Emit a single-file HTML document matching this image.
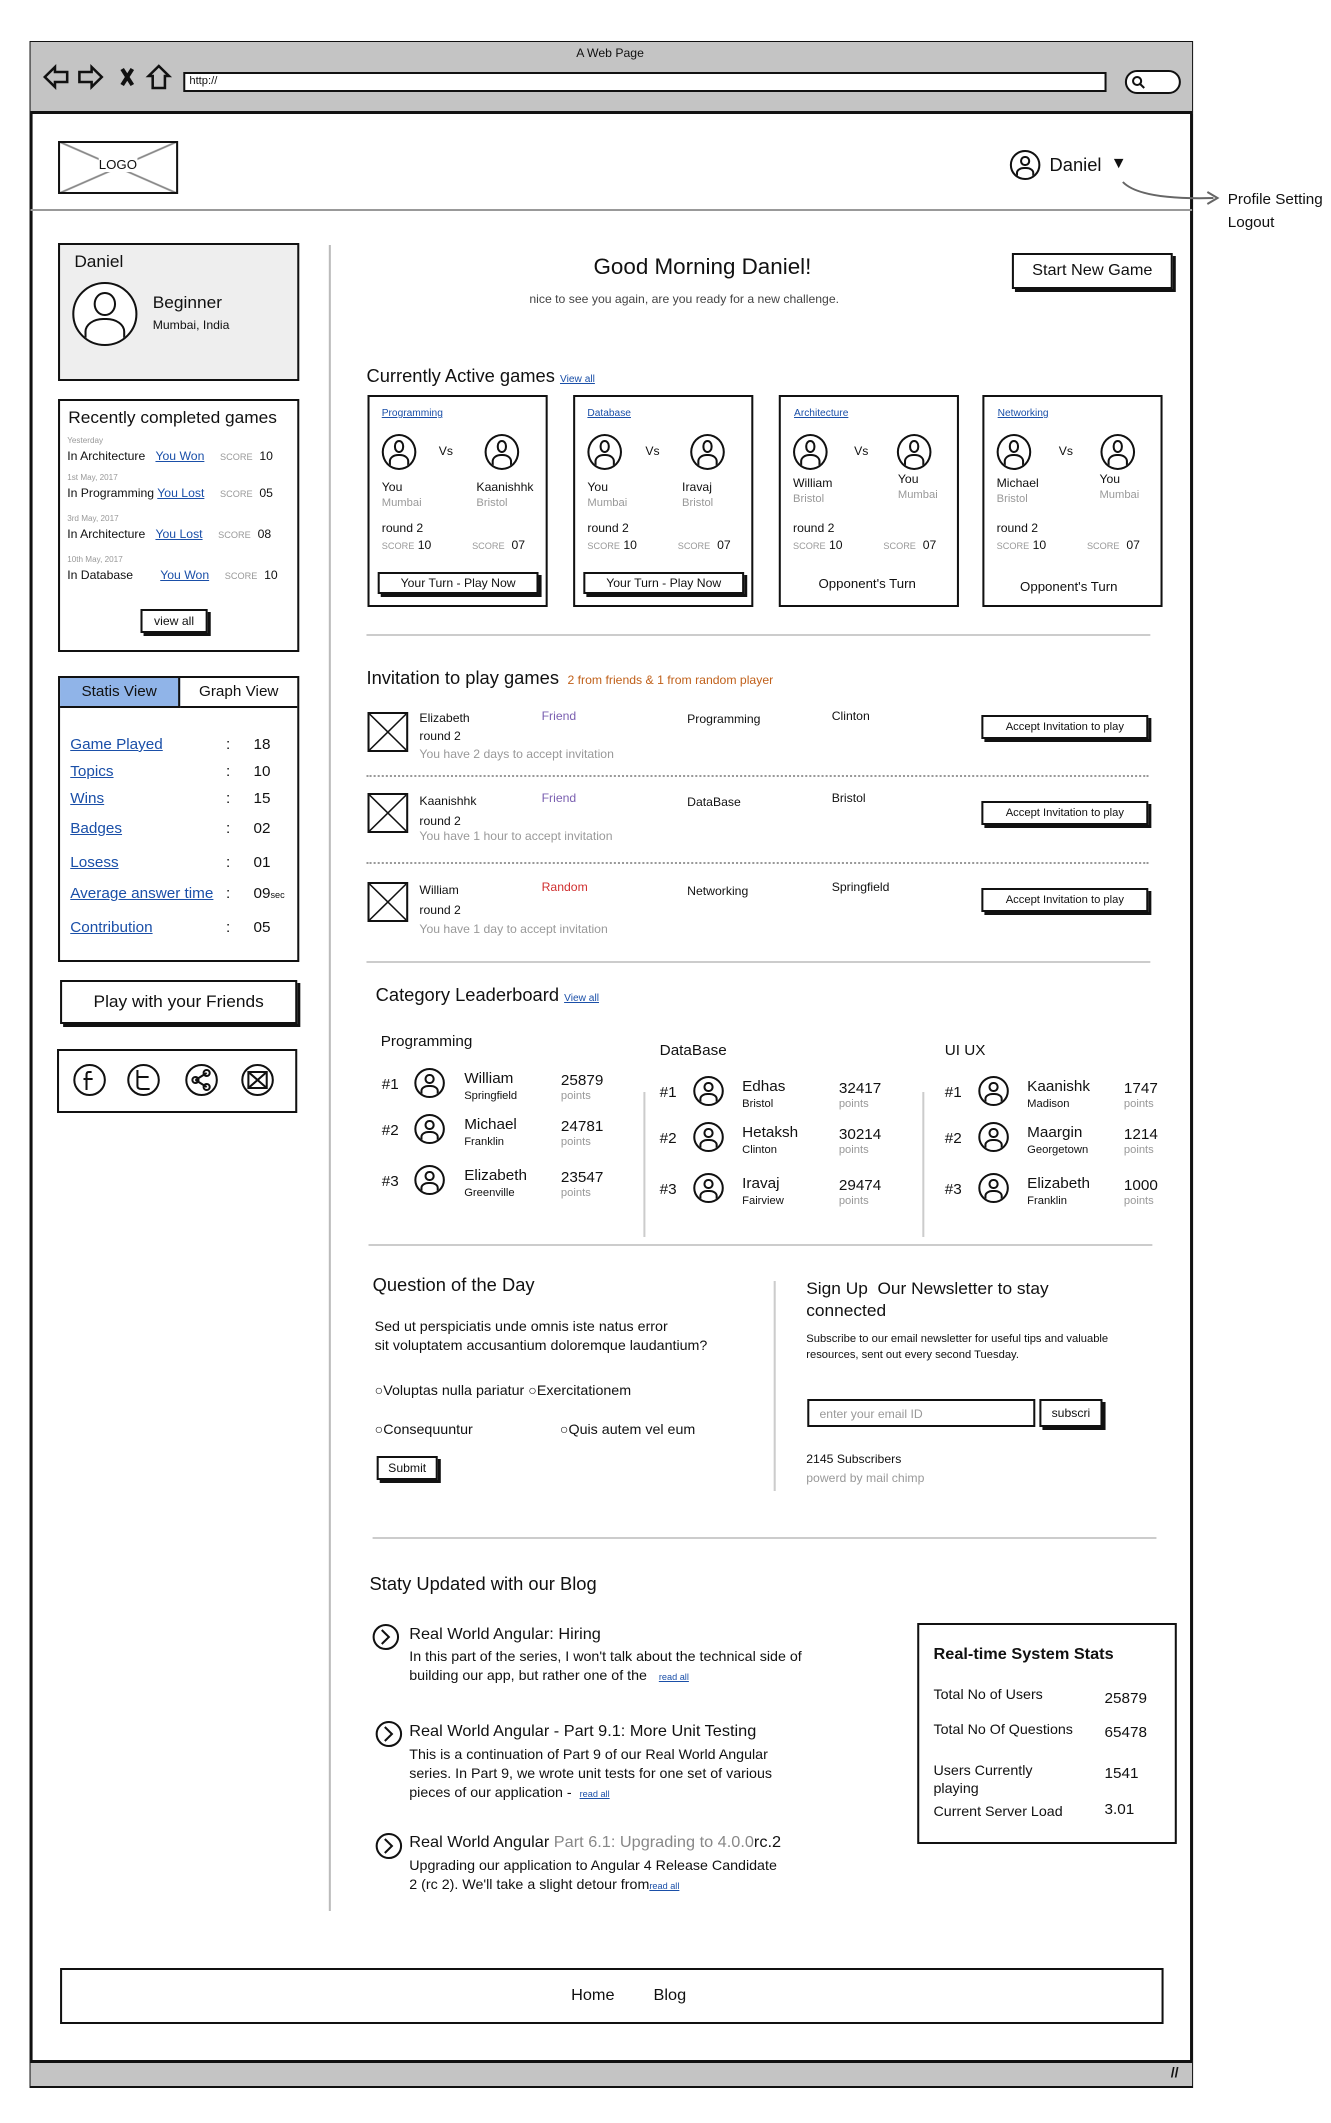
<!DOCTYPE html>
<html><head><meta charset="utf-8"><style>
*{margin:0;padding:0;box-sizing:border-box}
body{width:1331px;height:2123px;background:#fff;position:relative;font-family:"Liberation Sans",sans-serif;color:#111;overflow:hidden}
#w{position:absolute;left:0;top:0;width:1331px;height:2123px;transform:scaleX(1.018);transform-origin:0 0}
.a{position:absolute;white-space:nowrap}
.box{position:absolute;border:2.5px solid #111}
.btn{position:absolute;border:2px solid #111;box-shadow:3px 3px 0 #111;background:#fff;text-align:center}
.hl{position:absolute;height:2px;background:#ccc}
.lnk{color:#1a4fa8;text-decoration:underline}
.g{color:#999}
.s{font-size:11px}
.av{position:absolute;width:30px;height:30px;border:2px solid #111;border-radius:50%;overflow:hidden}
.av:before{content:"";position:absolute;left:32%;top:14%;width:36%;height:40%;border:2px solid #111;border-radius:50%;box-sizing:border-box}
.av:after{content:"";position:absolute;left:16%;top:56%;width:68%;height:50%;border:2px solid #111;border-radius:45% 45% 0 0;box-sizing:border-box}
.xb{position:absolute;width:40px;height:40px;border:2px solid #111;background:linear-gradient(45deg,transparent 48%,#111 49%,#111 51%,transparent 52%),linear-gradient(-45deg,transparent 48%,#111 49%,#111 51%,transparent 52%)}
.dot{position:absolute;height:0;border-top:2px dotted #999}
</style></head><body><div id="w">
<div class="box" style="left:29px;top:41px;width:1143px;height:2047px;border-width:3px"></div>
<div class="a" style="left:30px;top:42px;width:1141px;height:72px;background:#c4c4c4;border-bottom:3px solid #111"></div>
<div class="a" style="left:566px;top:46px;font-size:12px">A Web Page</div>
<svg class="a" style="left:42px;top:62px" width="140" height="30" viewBox="0 0 140 30" fill="none" stroke="#111" stroke-width="2.5">
<path d="M2 15 L12 5 V10 H24 V20 H12 V25 Z"/><path d="M58 15 L48 5 V10 H36 V20 H48 V25 Z"/>
<path d="M78 7 L88 23 M88 7 L78 23" stroke-width="4"/><path d="M104 14 L114 4 L124 14 H120 V26 H108 V14 Z"/></svg>
<div class="a" style="left:180px;top:72px;width:907px;height:20px;background:#fff;border:2.5px solid #111;font-size:11px;padding-left:4px;line-height:15px">http://</div>
<div class="a" style="left:1105px;top:70px;width:55px;height:24px;background:#fff;border:2.5px solid #111;border-radius:12px"></div>
<svg class="a" style="left:1110px;top:74px" width="16" height="16" fill="none" stroke="#111" stroke-width="2"><circle cx="7" cy="7" r="4"/><path d="M10 10 L14 14"/></svg>
<div class="a" style="left:30px;top:2060px;width:1141px;height:26px;background:#c4c4c4;border-top:3px solid #111"></div>
<div class="a" style="left:1150px;top:2064px;font-size:14px;font-weight:bold">//</div>
<div class="xb" style="left:57px;top:141px;width:118px;height:53px;border-width:2.5px;background:linear-gradient(24deg,transparent 48.5%,#888 49.5%,#888 50.5%,transparent 51.5%),linear-gradient(-24deg,transparent 48.5%,#888 49.5%,#888 50.5%,transparent 51.5%)"></div>
<div class="a" style="left:97px;top:157px;font-size:13px;background:#fff">LOGO</div>
<div class="av" style="left:992px;top:150px"></div>
<div class="a" style="left:1031px;top:155px;font-size:18px">Daniel</div>
<div class="a" style="left:1091px;top:155px;font-size:16px">▼</div>
<svg class="a" style="left:1100px;top:180px" width="100" height="30"><path d="M3 2 Q20 20 92 18" stroke="#666" stroke-width="2" fill="none"/><path d="M86 12 L96 18 L86 24" stroke="#666" stroke-width="2" fill="none"/></svg>
<div class="a" style="left:1206px;top:191px;font-size:15px">Profile Setting</div>
<div class="a" style="left:1206px;top:214px;font-size:15px">Logout</div>
<div class="hl" style="left:30px;top:209px;width:1141px;background:#999"></div>
<div class="box" style="left:57px;top:243px;width:237px;height:138px;background:#eee"></div>
<div class="a" style="left:73px;top:252px;font-size:17px">Daniel</div>
<div class="av" style="left:71px;top:282px;width:64px;height:64px;background:#fff"></div>
<div class="a" style="left:150px;top:293px;font-size:17px">Beginner</div>
<div class="a" style="left:150px;top:318px;font-size:12px">Mumbai, India</div>
<div class="box" style="left:57px;top:399px;width:237px;height:253px"></div>
<div class="a" style="left:67px;top:408px;font-size:17px">Recently completed games</div>
<div style="position:absolute;left:66px;top:437px;font-size:12px;line-height:1;white-space:nowrap">
<div class="g" style="font-size:8px">Yesterday</div><div style="margin-top:5px">In Architecture &nbsp;&nbsp;<span class="lnk">You Won</span> <span class="g" style="font-size:9px;margin-left:12px">SCORE</span> &nbsp;10</div>
<div class="g" style="font-size:8px;margin-top:12px">1st May, 2017</div><div style="margin-top:5px">In Programming <span class="lnk">You Lost</span> <span class="g" style="font-size:9px;margin-left:12px">SCORE</span> &nbsp;05</div>
<div class="g" style="font-size:8px;margin-top:16px">3rd May, 2017</div><div style="margin-top:5px">In Architecture &nbsp;&nbsp;<span class="lnk">You Lost</span> <span class="g" style="font-size:9px;margin-left:12px">SCORE</span> &nbsp;08</div>
<div class="g" style="font-size:8px;margin-top:16px">10th May, 2017</div><div style="margin-top:5px">In Database &nbsp;&nbsp;&nbsp;&nbsp;&nbsp;&nbsp;&nbsp;<span class="lnk">You Won</span> <span class="g" style="font-size:9px;margin-left:12px">SCORE</span> &nbsp;10</div></div>
<div class="btn" style="left:138px;top:609px;width:66px;height:24px;font-size:12px;line-height:20px">view all</div>
<div class="box" style="left:57px;top:676px;width:237px;height:286px"></div>
<div class="a" style="left:59px;top:678px;width:118px;height:30px;background:#90b4e8;border-right:2px solid #111;border-bottom:2px solid #111;font-size:15px;text-align:center;line-height:28px">Statis View</div>
<div class="a" style="left:177px;top:678px;width:115px;height:30px;border-bottom:2px solid #111;font-size:15px;text-align:center;line-height:28px">Graph View</div>
<div style="position:absolute;left:69px;top:737px;font-size:15px;line-height:1">
<div style="height:27px"><span class="lnk">Game Played</span></div><div style="height:27px"><span class="lnk">Topics</span></div><div style="height:30px"><span class="lnk">Wins</span></div><div style="height:34px"><span class="lnk">Badges</span></div><div style="height:31px"><span class="lnk">Losess</span></div><div style="height:34px"><span class="lnk">Average answer time</span></div><div><span class="lnk">Contribution</span></div></div>
<div style="position:absolute;left:222px;top:737px;font-size:15px;line-height:1">
<div style="height:27px">:</div><div style="height:27px">:</div><div style="height:30px">:</div><div style="height:34px">:</div><div style="height:31px">:</div><div style="height:34px">:</div><div>:</div></div>
<div style="position:absolute;left:249px;top:737px;font-size:15px;line-height:1">
<div style="height:27px">18</div><div style="height:27px">10</div><div style="height:30px">15</div><div style="height:34px">02</div><div style="height:31px">01</div><div style="height:34px">09<span style="font-size:9px">sec</span></div><div>05</div></div>
<div class="btn" style="left:59px;top:980px;width:233px;height:44px;font-size:17px;line-height:40px">Play with your Friends</div>
<div class="box" style="left:56px;top:1049px;width:236px;height:64px"></div>
<svg class="a" style="left:70px;top:1062px" width="210" height="36" fill="none" stroke="#111" stroke-width="2">
<circle cx="18" cy="18" r="15"/><path d="M20 10 H17 Q15 10 15 13 V28 M12 17 H21"/>
<circle cx="71" cy="18" r="15"/><path d="M65 8 V24 Q65 27 69 27 H77 M65 15 H76"/>
<circle cx="128" cy="18" r="15"/><circle cx="122" cy="18" r="3"/><circle cx="133" cy="11" r="3"/><circle cx="133" cy="25" r="3"/><path d="M122 18 L133 11 M122 18 L133 25"/>
<circle cx="183" cy="18" r="15"/><rect x="174" y="10" width="18" height="16"/><path d="M174 10 L192 26 M192 10 L174 26"/></svg>
<div class="a" style="left:323px;top:245px;width:2px;height:1666px;background:#bbb"></div>
<div class="a" style="left:583px;top:254px;font-size:22px">Good Morning Daniel!</div>
<div class="a" style="left:520px;top:292px;font-size:12px;color:#444">nice to see you again, are you ready for a new challenge.</div>
<div class="btn" style="left:994px;top:253px;width:158px;height:36px;font-size:16px;line-height:32px">Start New Game</div>
<div class="a" style="left:360px;top:366px;font-size:18px">Currently Active games <span class="lnk" style="font-size:10px">View all</span></div>
<div class="box" style="left:361px;top:395px;width:177px;height:212px"></div>
<div class="box" style="left:563px;top:395px;width:177px;height:212px"></div>
<div class="box" style="left:765px;top:395px;width:177px;height:212px"></div>
<div class="box" style="left:965px;top:395px;width:177px;height:212px"></div>
<div class="a lnk" style="left:375px;top:408px;font-size:10px">Programming</div>
<div class="a lnk" style="left:577px;top:408px;font-size:10px">Database</div>
<div class="a lnk" style="left:780px;top:408px;font-size:10px">Architecture</div>
<div class="a lnk" style="left:980px;top:408px;font-size:10px">Networking</div>
<div class="av" style="left:375px;top:434px;width:34px;height:36px"></div><div class="a" style="left:431px;top:444px;font-size:12px">Vs</div><div class="av" style="left:476px;top:434px;width:34px;height:36px"></div>
<div class="av" style="left:577px;top:434px;width:34px;height:36px"></div><div class="a" style="left:634px;top:444px;font-size:12px">Vs</div><div class="av" style="left:678px;top:434px;width:34px;height:36px"></div>
<div class="av" style="left:779px;top:434px;width:34px;height:36px"></div><div class="a" style="left:839px;top:444px;font-size:12px">Vs</div><div class="av" style="left:881px;top:434px;width:34px;height:36px"></div>
<div class="av" style="left:979px;top:434px;width:34px;height:36px"></div><div class="a" style="left:1040px;top:444px;font-size:12px">Vs</div><div class="av" style="left:1081px;top:434px;width:34px;height:36px"></div>
<div class="a" style="left:375px;top:480px;font-size:12px;line-height:15px">You<br><span class="g s">Mumbai</span></div>
<div class="a" style="left:468px;top:480px;font-size:12px;line-height:15px">Kaanishhk<br><span class="g s">Bristol</span></div>
<div class="a" style="left:577px;top:480px;font-size:12px;line-height:15px">You<br><span class="g s">Mumbai</span></div>
<div class="a" style="left:670px;top:480px;font-size:12px;line-height:15px">Iravaj<br><span class="g s">Bristol</span></div>
<div class="a" style="left:779px;top:476px;font-size:12px;line-height:15px">William<br><span class="g s">Bristol</span></div>
<div class="a" style="left:882px;top:472px;font-size:12px;line-height:15px">You<br><span class="g s">Mumbai</span></div>
<div class="a" style="left:979px;top:476px;font-size:12px;line-height:15px">Michael<br><span class="g s">Bristol</span></div>
<div class="a" style="left:1080px;top:472px;font-size:12px;line-height:15px">You<br><span class="g s">Mumbai</span></div>
<div class="a" style="left:375px;top:520px;font-size:12px;line-height:17px">round 2<br><span class="g" style="font-size:9px">SCORE</span> 10 &nbsp;&nbsp;&nbsp;&nbsp;&nbsp;&nbsp;&nbsp;&nbsp;&nbsp;&nbsp;&nbsp;<span class="g" style="font-size:9px">SCORE</span> &nbsp;07</div>
<div class="a" style="left:577px;top:520px;font-size:12px;line-height:17px">round 2<br><span class="g" style="font-size:9px">SCORE</span> 10 &nbsp;&nbsp;&nbsp;&nbsp;&nbsp;&nbsp;&nbsp;&nbsp;&nbsp;&nbsp;&nbsp;<span class="g" style="font-size:9px">SCORE</span> &nbsp;07</div>
<div class="a" style="left:779px;top:520px;font-size:12px;line-height:17px">round 2<br><span class="g" style="font-size:9px">SCORE</span> 10 &nbsp;&nbsp;&nbsp;&nbsp;&nbsp;&nbsp;&nbsp;&nbsp;&nbsp;&nbsp;&nbsp;<span class="g" style="font-size:9px">SCORE</span> &nbsp;07</div>
<div class="a" style="left:979px;top:520px;font-size:12px;line-height:17px">round 2<br><span class="g" style="font-size:9px">SCORE</span> 10 &nbsp;&nbsp;&nbsp;&nbsp;&nbsp;&nbsp;&nbsp;&nbsp;&nbsp;&nbsp;&nbsp;<span class="g" style="font-size:9px">SCORE</span> &nbsp;07</div>
<div class="btn" style="left:371px;top:572px;width:158px;height:22px;font-size:12px;line-height:18px">Your Turn - Play Now</div>
<div class="btn" style="left:573px;top:572px;width:158px;height:22px;font-size:12px;line-height:18px">Your Turn - Play Now</div>
<div class="a" style="left:804px;top:576px;font-size:13px">Opponent's Turn</div>
<div class="a" style="left:1002px;top:579px;font-size:13px">Opponent's Turn</div>
<div class="hl" style="left:360px;top:634px;width:770px"></div>
<div class="a" style="left:360px;top:668px;font-size:18px">Invitation to play games <span style="font-size:12px;color:#c0601a">&nbsp;2 from friends &amp; 1 from random player</span></div>
<div class="xb" style="left:361px;top:712px"></div>
<div class="a" style="left:412px;top:709px;font-size:12px;line-height:18px">Elizabeth<br>round 2<br><span class="g">You have 2 days to accept invitation</span></div>
<div class="a" style="left:532px;top:709px;font-size:12px;color:#7a5fb0">Friend</div>
<div class="a" style="left:675px;top:712px;font-size:12px">Programming</div>
<div class="a" style="left:817px;top:709px;font-size:12px">Clinton</div>
<div class="btn" style="left:964px;top:715px;width:164px;height:24px;font-size:11px;line-height:20px">Accept Invitation to play</div>
<div class="dot" style="left:360px;top:775px;width:768px"></div>
<div class="xb" style="left:361px;top:793px"></div>
<div class="a" style="left:412px;top:791px;font-size:12px;line-height:20px">Kaanishhk<br>round 2</div>
<div class="a g" style="left:412px;top:829px;font-size:12px">You have 1 hour to accept invitation</div>
<div class="a" style="left:532px;top:791px;font-size:12px;color:#7a5fb0">Friend</div>
<div class="a" style="left:675px;top:795px;font-size:12px">DataBase</div>
<div class="a" style="left:817px;top:791px;font-size:12px">Bristol</div>
<div class="btn" style="left:964px;top:801px;width:164px;height:24px;font-size:11px;line-height:20px">Accept Invitation to play</div>
<div class="dot" style="left:360px;top:862px;width:768px"></div>
<div class="xb" style="left:361px;top:882px"></div>
<div class="a" style="left:412px;top:880px;font-size:12px;line-height:20px">William<br>round 2</div>
<div class="a g" style="left:412px;top:922px;font-size:12px">You have 1 day to accept invitation</div>
<div class="a" style="left:532px;top:880px;font-size:12px;color:#d03030">Random</div>
<div class="a" style="left:675px;top:884px;font-size:12px">Networking</div>
<div class="a" style="left:817px;top:880px;font-size:12px">Springfield</div>
<div class="btn" style="left:964px;top:888px;width:164px;height:24px;font-size:11px;line-height:20px">Accept Invitation to play</div>
<div class="hl" style="left:360px;top:961px;width:770px"></div>
<div class="a" style="left:369px;top:985px;font-size:18px">Category Leaderboard <span class="lnk" style="font-size:10px">View all</span></div>
<div class="a" style="left:374px;top:1033px;font-size:15px">Programming</div>
<div class="a" style="left:648px;top:1042px;font-size:15px">DataBase</div>
<div class="a" style="left:928px;top:1042px;font-size:15px">UI UX</div>
<div class="a" style="left:632px;top:1092px;width:2px;height:145px;background:#ccc"></div>
<div class="a" style="left:906px;top:1092px;width:2px;height:145px;background:#ccc"></div>
<div class="a" style="left:375px;top:1076px;font-size:15px">#1</div><div class="av" style="left:407px;top:1068px"></div><div class="a" style="left:456px;top:1071px;font-size:15px;line-height:16px">William<br><span style="font-size:11px">Springfield</span></div><div class="a" style="left:551px;top:1074px;font-size:15px;line-height:14px">25879<br><span class="g s">points</span></div>
<div class="a" style="left:375px;top:1122px;font-size:15px">#2</div><div class="av" style="left:407px;top:1114px"></div><div class="a" style="left:456px;top:1117px;font-size:15px;line-height:16px">Michael<br><span style="font-size:11px">Franklin</span></div><div class="a" style="left:551px;top:1120px;font-size:15px;line-height:14px">24781<br><span class="g s">points</span></div>
<div class="a" style="left:375px;top:1173px;font-size:15px">#3</div><div class="av" style="left:407px;top:1165px"></div><div class="a" style="left:456px;top:1168px;font-size:15px;line-height:16px">Elizabeth<br><span style="font-size:11px">Greenville</span></div><div class="a" style="left:551px;top:1171px;font-size:15px;line-height:14px">23547<br><span class="g s">points</span></div>
<div class="a" style="left:648px;top:1084px;font-size:15px">#1</div><div class="av" style="left:681px;top:1076px"></div><div class="a" style="left:729px;top:1079px;font-size:15px;line-height:16px">Edhas<br><span style="font-size:11px">Bristol</span></div><div class="a" style="left:824px;top:1082px;font-size:15px;line-height:14px">32417<br><span class="g s">points</span></div>
<div class="a" style="left:648px;top:1130px;font-size:15px">#2</div><div class="av" style="left:681px;top:1122px"></div><div class="a" style="left:729px;top:1125px;font-size:15px;line-height:16px">Hetaksh<br><span style="font-size:11px">Clinton</span></div><div class="a" style="left:824px;top:1128px;font-size:15px;line-height:14px">30214<br><span class="g s">points</span></div>
<div class="a" style="left:648px;top:1181px;font-size:15px">#3</div><div class="av" style="left:681px;top:1173px"></div><div class="a" style="left:729px;top:1176px;font-size:15px;line-height:16px">Iravaj<br><span style="font-size:11px">Fairview</span></div><div class="a" style="left:824px;top:1179px;font-size:15px;line-height:14px">29474<br><span class="g s">points</span></div>
<div class="a" style="left:928px;top:1084px;font-size:15px">#1</div><div class="av" style="left:961px;top:1076px"></div><div class="a" style="left:1009px;top:1079px;font-size:15px;line-height:16px">Kaanishk<br><span style="font-size:11px">Madison</span></div><div class="a" style="left:1104px;top:1082px;font-size:15px;line-height:14px">1747<br><span class="g s">points</span></div>
<div class="a" style="left:928px;top:1130px;font-size:15px">#2</div><div class="av" style="left:961px;top:1122px"></div><div class="a" style="left:1009px;top:1125px;font-size:15px;line-height:16px">Maargin<br><span style="font-size:11px">Georgetown</span></div><div class="a" style="left:1104px;top:1128px;font-size:15px;line-height:14px">1214<br><span class="g s">points</span></div>
<div class="a" style="left:928px;top:1181px;font-size:15px">#3</div><div class="av" style="left:961px;top:1173px"></div><div class="a" style="left:1009px;top:1176px;font-size:15px;line-height:16px">Elizabeth<br><span style="font-size:11px">Franklin</span></div><div class="a" style="left:1104px;top:1179px;font-size:15px;line-height:14px">1000<br><span class="g s">points</span></div>
<div class="hl" style="left:362px;top:1244px;width:770px"></div>
<div class="a" style="left:366px;top:1275px;font-size:18px">Question of the Day</div>
<div class="a" style="left:368px;top:1317px;font-size:14px;line-height:19px">Sed ut perspiciatis unde omnis iste natus error<br>sit voluptatem accusantium doloremque laudantium?</div>
<div class="a" style="left:368px;top:1382px;font-size:14px">○Voluptas nulla pariatur ○Exercitationem</div>
<div class="a" style="left:368px;top:1421px;font-size:14px">○Consequuntur</div>
<div class="a" style="left:550px;top:1421px;font-size:14px">○Quis autem vel eum</div>
<div class="btn" style="left:370px;top:1456px;width:60px;height:24px;font-size:12px;line-height:20px">Submit</div>
<div class="a" style="left:760px;top:1281px;width:2px;height:210px;background:#ccc"></div>
<div class="a" style="left:792px;top:1278px;font-size:17px;line-height:22px">Sign Up &nbsp;Our Newsletter to stay<br>connected</div>
<div class="a" style="left:792px;top:1331px;font-size:11px;line-height:16px">Subscribe to our email newsletter for useful tips and valuable<br>resources, sent out every second Tuesday.</div>
<div class="a" style="left:793px;top:1399px;width:224px;height:28px;border:2px solid #111;font-size:12px;color:#999;padding:6px 10px">enter your email ID</div>
<div class="btn" style="left:1021px;top:1399px;width:62px;height:28px;font-size:12px;line-height:24px">subscri</div>
<div class="a" style="left:792px;top:1452px;font-size:12px">2145 Subscribers</div>
<div class="a g" style="left:792px;top:1471px;font-size:12px">powerd by mail chimp</div>
<div class="hl" style="left:366px;top:1537px;width:770px"></div>
<div class="a" style="left:363px;top:1574px;font-size:18px">Staty Updated with our Blog</div>
<svg class="a" style="left:365px;top:1623px" width="30" height="30" fill="none" stroke="#111" stroke-width="2"><circle cx="14" cy="14" r="12"/><path d="M10 7 L17 14 L10 21"/></svg>
<div class="a" style="left:402px;top:1625px;font-size:16px;line-height:19px">Real World Angular: Hiring</div>
<div class="a" style="left:402px;top:1647px;font-size:14px;line-height:19px">In this part of the series, I won't talk about the technical side of<br>building our app, but rather one of the &nbsp;&nbsp;<span class="lnk" style="font-size:9px">read all</span></div>
<svg class="a" style="left:368px;top:1720px" width="30" height="30" fill="none" stroke="#111" stroke-width="2"><circle cx="14" cy="14" r="12"/><path d="M10 7 L17 14 L10 21"/></svg>
<div class="a" style="left:402px;top:1723px;font-size:16px">Real World Angular - Part 9.1: More Unit Testing</div>
<div class="a" style="left:402px;top:1745px;font-size:14px;line-height:19px">This is a continuation of Part 9 of our Real World Angular<br>series. In Part 9, we wrote unit tests for one set of various<br>pieces of our application - &nbsp;<span class="lnk" style="font-size:9px">read all</span></div>
<svg class="a" style="left:368px;top:1832px" width="30" height="30" fill="none" stroke="#111" stroke-width="2"><circle cx="14" cy="14" r="12"/><path d="M10 7 L17 14 L10 21"/></svg>
<div class="a" style="left:402px;top:1834px;font-size:16px">Real World Angular <span style="color:#888">Part 6.1: Upgrading to 4.0.0</span>rc.2</div>
<div class="a" style="left:402px;top:1856px;font-size:14px;line-height:19px">Upgrading our application to Angular 4 Release Candidate<br>2 (rc 2). We'll take a slight detour from<span class="lnk" style="font-size:9px">read all</span></div>
<div class="box" style="left:901px;top:1623px;width:255px;height:221px"></div>
<div class="a" style="left:917px;top:1646px;font-size:16px;font-weight:bold">Real-time System Stats</div>
<div class="a" style="left:917px;top:1686px;font-size:14px">Total No of Users</div><div class="a" style="left:1085px;top:1690px;font-size:15px">25879</div>
<div class="a" style="left:917px;top:1721px;font-size:14px">Total No Of Questions</div><div class="a" style="left:1085px;top:1724px;font-size:15px">65478</div>
<div class="a" style="left:917px;top:1761px;font-size:14px;line-height:18px">Users Currently<br>playing</div><div class="a" style="left:1085px;top:1765px;font-size:15px">1541</div>
<div class="a" style="left:917px;top:1803px;font-size:14px">Current Server Load</div><div class="a" style="left:1085px;top:1801px;font-size:15px">3.01</div>
<div class="box" style="left:59px;top:1968px;width:1084px;height:56px"></div>
<div class="a" style="left:561px;top:1987px;font-size:16px">Home</div>
<div class="a" style="left:642px;top:1987px;font-size:16px">Blog</div>
</div></body></html>
